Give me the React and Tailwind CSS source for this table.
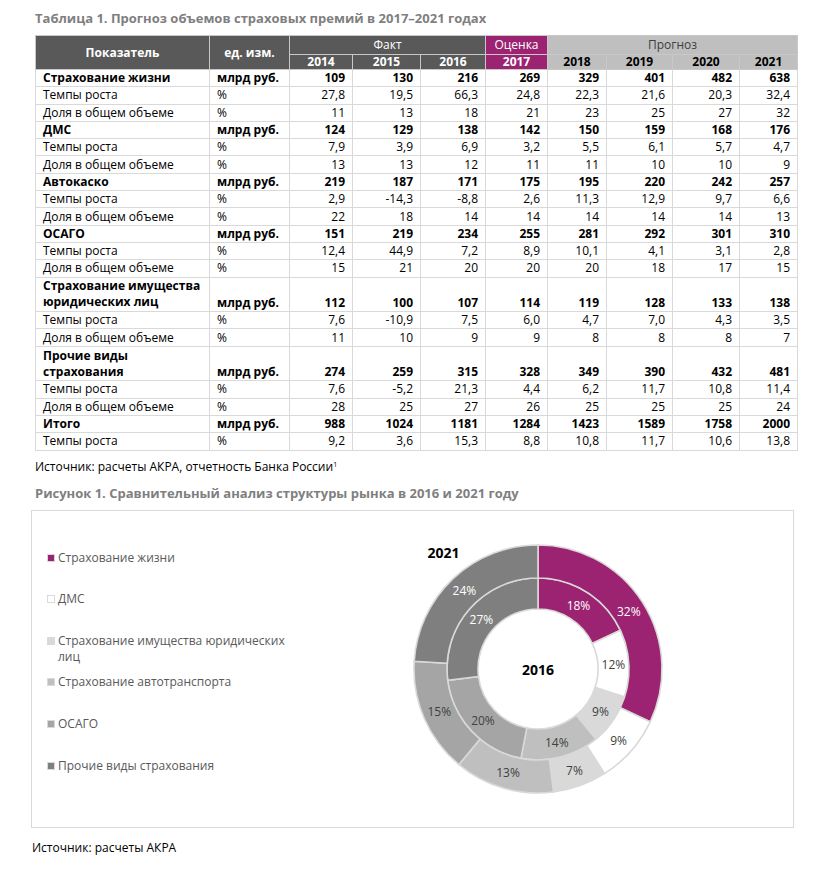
import React from "react";

const rows = [
  { n: "Страхование жизни", u: "млрд руб.", b: true, v: ["109", "130", "216", "269", "329", "401", "482", "638"] },
  { n: "Темпы роста", u: "%", v: ["27,8", "19,5", "66,3", "24,8", "22,3", "21,6", "20,3", "32,4"] },
  { n: "Доля в общем объеме", u: "%", v: ["11", "13", "18", "21", "23", "25", "27", "32"] },
  { n: "ДМС", u: "млрд руб.", b: true, v: ["124", "129", "138", "142", "150", "159", "168", "176"] },
  { n: "Темпы роста", u: "%", v: ["7,9", "3,9", "6,9", "3,2", "5,5", "6,1", "5,7", "4,7"] },
  { n: "Доля в общем объеме", u: "%", v: ["13", "13", "12", "11", "11", "10", "10", "9"] },
  { n: "Автокаско", u: "млрд руб.", b: true, v: ["219", "187", "171", "175", "195", "220", "242", "257"] },
  { n: "Темпы роста", u: "%", v: ["2,9", "-14,3", "-8,8", "2,6", "11,3", "12,9", "9,7", "6,6"] },
  { n: "Доля в общем объеме", u: "%", v: ["22", "18", "14", "14", "14", "14", "14", "13"] },
  { n: "ОСАГО", u: "млрд руб.", b: true, v: ["151", "219", "234", "255", "281", "292", "301", "310"] },
  { n: "Темпы роста", u: "%", v: ["12,4", "44,9", "7,2", "8,9", "10,1", "4,1", "3,1", "2,8"] },
  { n: "Доля в общем объеме", u: "%", v: ["15", "21", "20", "20", "20", "18", "17", "15"] },
  { n: "Страхование имущества юридических лиц", u: "млрд руб.", b: true, d: true, v: ["112", "100", "107", "114", "119", "128", "133", "138"] },
  { n: "Темпы роста", u: "%", v: ["7,6", "-10,9", "7,5", "6,0", "4,7", "7,0", "4,3", "3,5"] },
  { n: "Доля в общем объеме", u: "%", v: ["11", "10", "9", "9", "8", "8", "8", "7"] },
  { n: "Прочие виды страхования", u: "млрд руб.", b: true, d: true, v: ["274", "259", "315", "328", "349", "390", "432", "481"] },
  { n: "Темпы роста", u: "%", v: ["7,6", "-5,2", "21,3", "4,4", "6,2", "11,7", "10,8", "11,4"] },
  { n: "Доля в общем объеме", u: "%", v: ["28", "25", "27", "26", "25", "25", "25", "24"] },
  { n: "Итого", u: "млрд руб.", b: true, v: ["988", "1024", "1181", "1284", "1423", "1589", "1758", "2000"] },
  { n: "Темпы роста", u: "%", v: ["9,2", "3,6", "15,3", "8,8", "10,8", "11,7", "10,6", "13,8"] },
];

const segs = [
  { c: "#9b2372", t: "#ffffff", o: 32, i: 18 },
  { c: "#ffffff", t: "#404040", o: 9, i: 12 },
  { c: "#d9d9d9", t: "#404040", o: 7, i: 9 },
  { c: "#bfbfbf", t: "#404040", o: 13, i: 14 },
  { c: "#a5a5a5", t: "#404040", o: 15, i: 20 },
  { c: "#7f7f7f", t: "#ffffff", o: 24, i: 27 },
];

const legend = [
  { c: "bg-[#9b2372]", t: "Страхование жизни" },
  { c: "bg-white border-[#a6a6a6]", t: "ДМС" },
  { c: "bg-[#d9d9d9]", t: "Страхование имущества юридических лиц" },
  { c: "bg-[#bfbfbf]", t: "Страхование автотранспорта" },
  { c: "bg-[#a5a5a5]", t: "ОСАГО" },
  { c: "bg-[#7f7f7f]", t: "Прочие виды страхования" },
];

const CX = 130;
const CY = 130;

function pt(r, a) {
  const rad = (a * Math.PI) / 180;
  return [CX + r * Math.sin(rad), CY - r * Math.cos(rad)];
}

function arc(r0, r1, a0, a1) {
  const large = a1 - a0 > 180 ? 1 : 0;
  const [x1, y1] = pt(r1, a0);
  const [x2, y2] = pt(r1, a1);
  const [x3, y3] = pt(r0, a1);
  const [x4, y4] = pt(r0, a0);
  return `M${x1} ${y1} A${r1} ${r1} 0 ${large} 1 ${x2} ${y2} L${x3} ${y3} A${r0} ${r0} 0 ${large} 0 ${x4} ${y4} Z`;
}

function Ring({ r0, r1, k }) {
  let acc = 0;
  const items = segs.map((s, idx) => {
    const a0 = (acc / 100) * 360;
    acc += s[k];
    const a1 = (acc / 100) * 360;
    const mid = (a0 + a1) / 2;
    const [lx, ly] = pt((r0 + r1) / 2, mid);
    return { s, idx, a0, a1, lx, ly };
  });
  return (
    <g>
      {items.map(({ s, idx, a0, a1 }) => (
        <path key={idx} d={arc(r0, r1, a0, a1)} fill={s.c} stroke="#d9d9d9" strokeWidth="1.6" />
      ))}
      {items.map(({ s, idx, lx, ly }) => (
        <text key={"t" + idx} x={lx} y={ly} fill={s.t} fontSize="12" textAnchor="middle" dominantBaseline="central">
          {s[k]}%
        </text>
      ))}
    </g>
  );
}

const th = "border border-[#c8c8c8] p-0 text-center";
const td = "border border-[#d9d9d9] p-0";

export default function App() {
  return (
    <div className="w-[826px] h-[878px] bg-white text-black font-['Open_Sans','Noto_Sans',sans-serif]">
      <div className="pl-[35px] pt-[9px]">
        <h1 className="text-[13px] leading-[18px] font-bold text-[#7f7f7f]">
          Таблица 1. Прогноз объемов страховых премий в 2017–2021 годах
        </h1>
        <table className="mt-[8px] table-fixed border-collapse w-[762px] text-[12px] leading-[16px]">
          <colgroup>
            <col className="w-[174px]" />
            <col className="w-[80px]" />
            <col className="w-[63px]" />
            <col className="w-[68px]" />
            <col className="w-[65px]" />
            <col className="w-[62px]" />
            <col className="w-[59px]" />
            <col className="w-[66px]" />
            <col className="w-[67px]" />
            <col className="w-[58px]" />
          </colgroup>
          <thead>
            <tr className="h-[19px]">
              <th rowSpan={2} className={th + " bg-[#595959] text-white font-bold"}>Показатель</th>
              <th rowSpan={2} className={th + " bg-[#595959] text-white font-bold"}>ед. изм.</th>
              <th colSpan={3} className={th + " bg-[#595959] text-white font-normal"}>Факт</th>
              <th className={th + " bg-[#9b2372] text-white font-normal"}>Оценка</th>
              <th colSpan={4} className={th + " bg-[#bfbfbf] text-[#404040] font-normal"}>Прогноз</th>
            </tr>
            <tr className="h-[15px] leading-[14px]">
              <th className={th + " bg-[#595959] text-white font-bold"}>2014</th>
              <th className={th + " bg-[#595959] text-white font-bold"}>2015</th>
              <th className={th + " bg-[#595959] text-white font-bold"}>2016</th>
              <th className={th + " bg-[#9b2372] text-white font-bold"}>2017</th>
              <th className={th + " bg-[#bfbfbf] text-black font-bold"}>2018</th>
              <th className={th + " bg-[#bfbfbf] text-black font-bold"}>2019</th>
              <th className={th + " bg-[#bfbfbf] text-black font-bold"}>2020</th>
              <th className={th + " bg-[#bfbfbf] text-black font-bold"}>2021</th>
            </tr>
          </thead>
          <tbody>
            {rows.map((r, i) => (
              <tr key={i} className={r.d ? "h-[34.6px]" : "h-[17.3px]"}>
                <td className={td + " pl-[7px] align-middle " + (r.b ? "font-bold" : "")}>{r.n}</td>
                <td className={td + " pl-[7px] " + (r.d ? "align-bottom " : "align-middle ") + (r.b ? "font-bold" : "")}>{r.u}</td>
                {r.v.map((x, j) => (
                  <td key={j} className={td + " pr-[7px] text-right " + (r.d ? "align-bottom " : "align-middle ") + (r.b ? "font-bold" : "")}>
                    {x}
                  </td>
                ))}
              </tr>
            ))}
          </tbody>
        </table>
        <p className="mt-[8px] text-[12px] leading-[16px]">
          Источник: расчеты АКРА, отчетность Банка России<sup className="text-[7px]">1</sup>
        </p>
        <h2 className="mt-[9px] text-[13px] leading-[18px] font-bold text-[#7f7f7f]">
          Рисунок 1. Сравнительный анализ структуры рынка в 2016 и 2021 году
        </h2>
      </div>
      <div className="ml-[31px] mt-[8px] w-[763px] h-[318px] border border-[#d9d9d9] flex">
        <div className="w-[376px] pl-[15px] pt-[39px] flex flex-col">
          {legend.map((l, i) => (
            <div key={i} className="h-[41.6px] flex items-start">
              <span className={"mt-[4px] w-[8px] h-[8px] shrink-0 border border-[#d9d9d9] " + l.c}></span>
              <span className="ml-[3px] w-[235px] text-[12px] leading-[16px] text-[#595959]">{l.t}</span>
            </div>
          ))}
        </div>
        <svg width="260" height="262" viewBox="0 0 260 262" className="mt-[28px] shrink-0">
          <Ring r0={60} r1={91} k="i" />
          <Ring r0={91} r1={124} k="o" />
          <text x="35.5" y="18.5" fontSize="14" fontWeight="bold" textAnchor="middle" fill="#000">2021</text>
          <text x="130" y="135.5" fontSize="14" fontWeight="bold" textAnchor="middle" fill="#000">2016</text>
        </svg>
      </div>
      <p className="ml-[32px] mt-[12px] text-[12px] leading-[16px]">Источник: расчеты АКРА</p>
    </div>
  );
}
